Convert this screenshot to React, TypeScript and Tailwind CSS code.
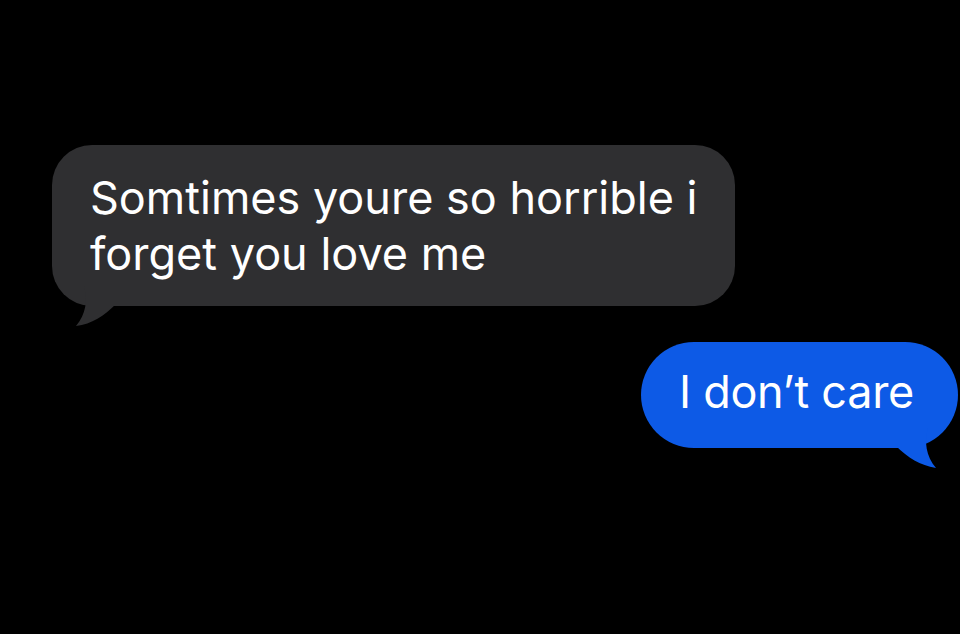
import React from 'react';

const font = { fontFamily: 'Inter, "Noto Sans", Roboto, sans-serif' };

function Bubble({
  text,
  side,
}: {
  text: string;
  side: 'left' | 'right';
}) {
  if (side === 'left') {
    return (
      <div className="relative ml-[52px] w-[683px] rounded-[40px] bg-[#2f2f31] pb-[24px] pt-[25px] pl-[38px] pr-[30px]">
        <p className="text-[45px] leading-[56px] text-white">{text}</p>
        {/* tail, bottom-left */}
        <svg className="absolute -bottom-[20px] left-[18px]" width="50" height="40" viewBox="0 0 50 40">
          <path d="M14 0 C 18 14, 16 28, 6 40 C 22 38, 34 30, 46 18 L 46 0 Z" fill="#2f2f31" />
        </svg>
      </div>
    );
  }
  return (
    <div className="relative mr-[2px] rounded-[53px] bg-[#0d5ae6] pb-[25px] pt-[19px] pl-[38px] pr-[44px]">
      <p className="text-[45px] leading-[62px] tracking-[-0.3px] text-white">{text}</p>
      {/* tail, bottom-right */}
      <svg className="absolute -bottom-[20px] right-[16px]" width="48" height="40" viewBox="0 0 48 40">
        <path d="M34 0 C 30 14, 32 28, 42 40 C 26 37, 14 30, 2 18 L 2 0 Z" fill="#0d5ae6" />
      </svg>
    </div>
  );
}

export default function App() {
  return (
    <div className="h-[634px] w-[960px] overflow-hidden bg-black" style={font}>
      <div className="flex flex-col pt-[145px]">
        <Bubble side="left" text="Somtimes youre so horrible i forget you love me" />
        <div className="mt-[36px] flex justify-end">
          <Bubble side="right" text="I don’t care" />
        </div>
      </div>
    </div>
  );
}
